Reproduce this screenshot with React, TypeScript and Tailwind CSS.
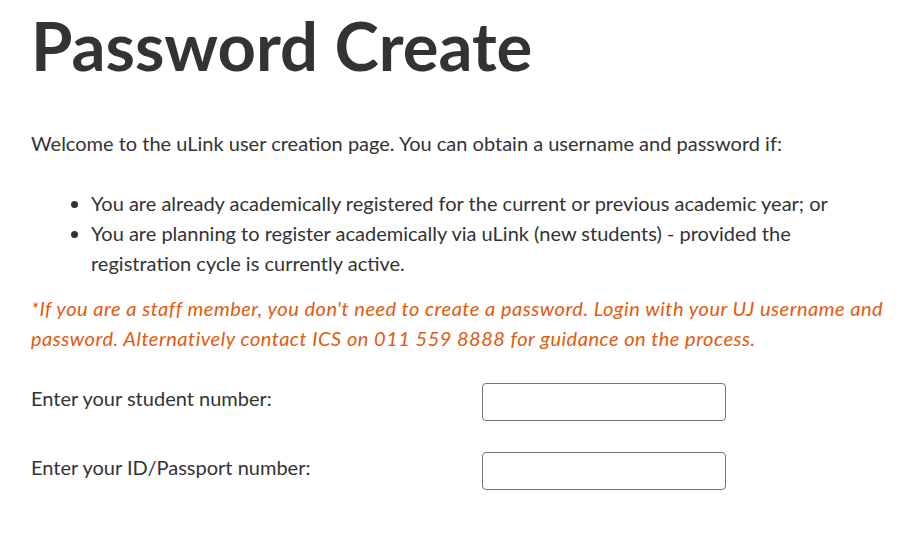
import React from 'react';

const font = { fontFamily: 'Lato, "Open Sans", sans-serif' };

export default function App() {
  return (
    <div className="min-h-screen bg-white text-[#333333] pl-[31px] pr-6" style={font}>
      <h1 className="pt-[12px] text-[67px] leading-[67px] font-bold">Password Create</h1>

      <p className="mt-[49px] text-[20px] leading-[30px]">
        Welcome to the uLink user creation page. You can obtain a username and password if:
      </p>

      <ul className="mt-[30px] list-disc pl-[60px] text-[20px] leading-[30px]">
        <li>You are already academically registered for the current or previous academic year; or</li>
        <li>
          You are planning to register academically via uLink (new students) - provided the
          <br />
          registration cycle is currently active.
        </li>
      </ul>

      <p className="mt-[15px] text-[20px] leading-[30px] italic tracking-[0.5px] text-[#e35a0e]">
        *If you are a staff member, you don't need to create a password. Login with your UJ username and
        <br />
        password. Alternatively contact ICS on 011 559 8888 for guidance on the process.
      </p>

      <div className="mt-[30px] flex flex-col gap-[31px] text-[20px] leading-[30px]">
        <div className="flex items-start">
          <label htmlFor="student" className="w-[451px]">Enter your student number:</label>
          <input id="student" type="text" className="w-[244px] h-[38px] border border-[#767676] rounded-[4px] bg-white px-2" />
        </div>
        <div className="flex items-start">
          <label htmlFor="idnum" className="w-[451px]">Enter your ID/Passport number:</label>
          <input id="idnum" type="text" className="w-[244px] h-[38px] border border-[#767676] rounded-[4px] bg-white px-2" />
        </div>
      </div>
    </div>
  );
}
